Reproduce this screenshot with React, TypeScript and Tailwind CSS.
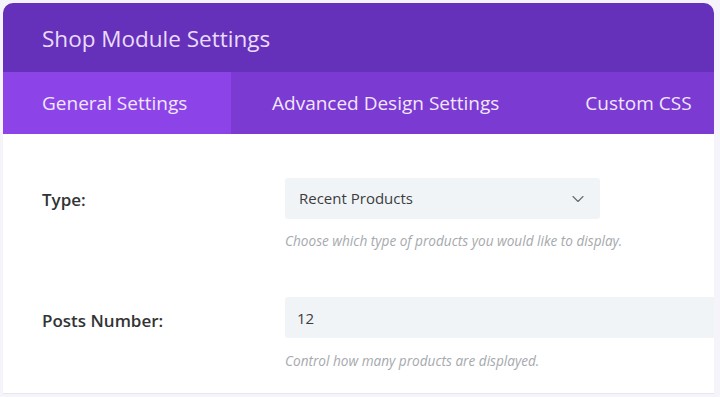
import React from 'react';
import { ChevronDown } from 'lucide-react';

const App: React.FC = () => {
  return (
    <div
      className="w-[720px] h-[397px] overflow-hidden bg-[#f6f4fb] pl-[3px] pt-[3px] pr-[6px]"
      style={{ fontFamily: '"Open Sans", "Noto Sans", sans-serif' }}
    >
      <div className="h-[391px] rounded-t-[10px] overflow-hidden bg-white border-b border-[#e6e6ec] flex flex-col">
        {/* Header */}
        <div className="h-[69px] bg-[#6631ba] flex items-center pl-[39px] pt-[3px]">
          <h1 className="text-[22.5px] font-normal text-[#e9dcfa]">Shop Module Settings</h1>
        </div>

        {/* Tabs */}
        <div className="h-[62px] bg-[#7b3ad2] flex text-[19px] font-medium text-[#f1e6fd] whitespace-nowrap">
          <button className="w-[228px] bg-[#8c44e8] text-left pl-[39px]">General Settings</button>
          <button className="pl-[41px] pr-[44px]">Advanced Design Settings</button>
          <button className="pl-[42px]">Custom CSS</button>
        </div>

        {/* Body */}
        <div className="flex-1 pt-[44px]">
          <div className="flex">
            <div className="w-[282px] pl-[39px] pt-[9px] text-[17px] font-semibold text-[#333336]">Type:</div>
            <div>
              <div className="w-[315px] h-[41px] bg-[#f1f4f7] rounded-[3px] flex items-center justify-between pl-[14px] pr-[12px] text-[15px] text-[#3c3c40]">
                <span>Recent Products</span>
                <ChevronDown className="w-[20px] h-[20px] text-[#6b6b70]" strokeWidth={1.4} />
              </div>
              <p className="mt-[12px] text-[13.6px] italic text-[#a6a9ad]">
                Choose which type of products you would like to display.
              </p>
            </div>
          </div>

          <div className="flex mt-[46px]">
            <div className="w-[282px] pl-[39px] pt-[11px] text-[17px] font-semibold text-[#333336]">Posts Number:</div>
            <div className="flex-1">
              <div className="h-[41px] bg-[#f1f4f7] rounded-l-[3px] flex items-center pl-[12px] text-[15px] text-[#3c3c40]">
                12
              </div>
              <p className="mt-[13px] text-[13.6px] italic text-[#a6a9ad]">Control how many products are displayed.</p>
            </div>
          </div>
        </div>
      </div>
    </div>
  );
};

export default App;
